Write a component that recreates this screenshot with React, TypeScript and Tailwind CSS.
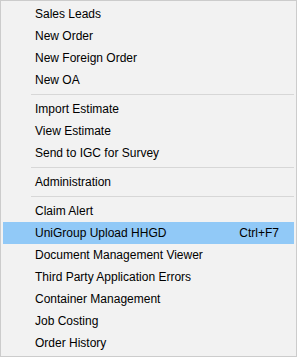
type Entry = { label: string; shortcut?: string; active?: boolean } | "sep"

const entries: Entry[] = [
  { label: "Sales Leads" },
  { label: "New Order" },
  { label: "New Foreign Order" },
  { label: "New OA" },
  "sep",
  { label: "Import Estimate" },
  { label: "View Estimate" },
  { label: "Send to IGC for Survey" },
  "sep",
  { label: "Administration" },
  "sep",
  { label: "Claim Alert" },
  { label: "UniGroup Upload HHGD", shortcut: "Ctrl+F7", active: true },
  { label: "Document Management Viewer" },
  { label: "Third Party Application Errors" },
  { label: "Container Management" },
  { label: "Job Costing" },
  { label: "Order History" },
]

const MenuRow = ({ label, shortcut, active }: { label: string; shortcut?: string; active?: boolean }) => {
  return (
    <div
      className={`flex h-[22px] items-center justify-between pl-[32px] pr-[15px] ${
        active ? "bg-[#91c9f7]" : ""
      }`}
    >
      <span>{label}</span>
      {shortcut && <span>{shortcut}</span>}
    </div>
  )
}

export default function App() {
  return (
    <div className="box-border flex h-[357px] w-[297px] flex-col border border-[#cccccc] bg-[#f2f2f2] p-[2px] font-['Liberation_Sans',Arial,sans-serif] text-[12px] leading-[14px] text-black">
      {entries.map((e, i) =>
        e === "sep" ? (
          <div key={i} className="flex h-[7px] items-center pl-[28px]">
            <div className="h-px w-full bg-[#d7d7d7]" />
          </div>
        ) : (
          <MenuRow key={i} {...e} />
        )
      )}
    </div>
  )
}
